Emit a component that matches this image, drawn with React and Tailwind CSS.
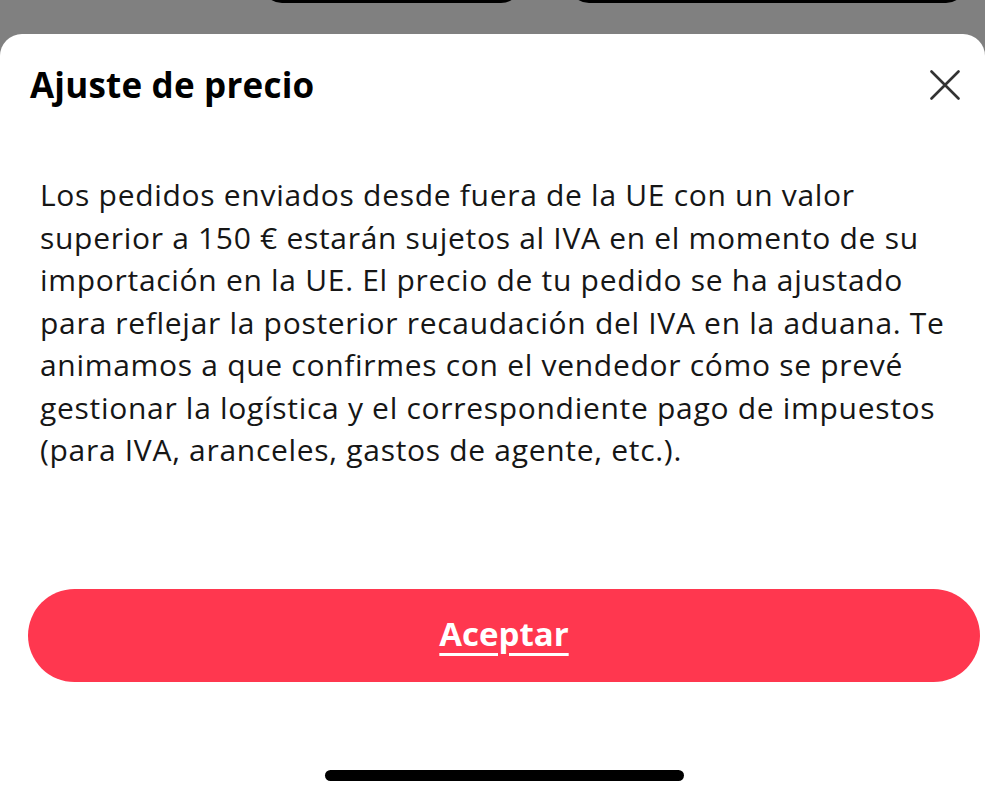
import React from "react";

const lines = [
  "Los pedidos enviados desde fuera de la UE con un valor",
  "superior a 150 € estarán sujetos al IVA en el momento de su",
  "importación en la UE. El precio de tu pedido se ha ajustado",
  "para reflejar la posterior recaudación del IVA en la aduana. Te",
  "animamos a que confirmes con el vendedor cómo se prevé",
  "gestionar la logística y el correspondiente pago de impuestos",
  "(para IVA, aranceles, gastos de agente, etc.).",
];

export default function App() {
  return (
    <div className="h-[800px] w-[985px] overflow-hidden bg-[#808080] flex flex-col" style={{ fontFamily: "'Open Sans', Lato, sans-serif" }}>
      {/* page behind the sheet, dimmed */}
      <div className="h-[34px] shrink-0 overflow-hidden flex">
        <div className="ml-[262px] w-[259px] h-[40px] -mt-[37px] rounded-full border-[3px] border-black" />
        <div className="ml-[48px] w-[397px] h-[40px] -mt-[37px] rounded-full border-[3px] border-black" />
      </div>

      <div className="flex-1 bg-white rounded-t-[22px] flex flex-col">
        <div className="flex items-center justify-between pl-[30px] pr-[25px] pt-[29px]">
          <h1 className="text-[35px] leading-[44px] font-bold text-black tracking-[0.2px]">Ajuste de precio</h1>
          <svg width="30" height="30" viewBox="0 0 30 30" className="text-[#333]">
            <path d="M1.5 1.5 L28.5 28.5 M28.5 1.5 L1.5 28.5" stroke="currentColor" strokeWidth="2.6" strokeLinecap="round" />
          </svg>
        </div>

        <p className="pl-[40px] pr-[20px] pt-[67px] text-[30px] leading-[42.5px] tracking-[0.7px] text-[#161616] whitespace-nowrap">
          {lines.map((l) => (
            <span key={l} className="block">{l}</span>
          ))}
        </p>

        <div className="pl-[28px] pr-[5px] mt-auto mb-[88px]">
          <button className="w-full h-[93px] rounded-full bg-[#ff374f] flex items-center justify-center">
            <span className="text-white text-[33px] font-bold underline underline-offset-[7px] decoration-[3px] -mt-[3px]">Aceptar</span>
          </button>
        </div>

        <div className="flex pl-[325px] pb-[19px]">
          <div className="w-[359px] h-[11px] rounded-full bg-black" />
        </div>
      </div>
    </div>
  );
}
